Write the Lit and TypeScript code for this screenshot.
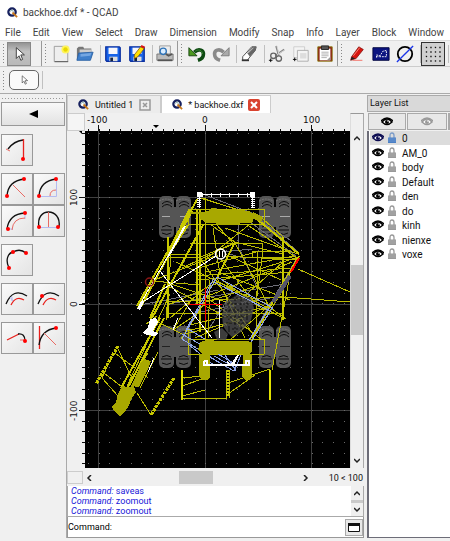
import { LitElement, html, svg, css } from "lit";
import { customElement, property, state } from "lit/decorators.js";
import { classMap } from "lit/directives/class-map.js";

type Seg = [number, number, number, number];

/* ---------- toolbar icons (20 x 20) ---------- */
const toolIcons: Record<string, unknown> = {
  select: svg`<path d="M7 3v12l3-3 2 5 2-1-2-5h4z" fill="#fff" stroke="#333"/>`,
  new: svg`<path d="M2.500 1.500h15v17h-15z" fill="#eee" stroke="#999"/><path d="M3 18.500h15" stroke="#555"/>
    <circle cx="15" cy="5" r="4.500" fill="#fff45a"/><circle cx="15" cy="5" r="2.500" fill="#e8d800"/>`,
  open: svg`<path d="M1 16V4l2-2h5l1 2h8v10z" fill="#777"/><path d="M4 5h13v8H4z" fill="#ccc"/>
    <path d="M3 9l16-1-3 9H1z" fill="#3f7fcb" stroke="#2b62a5"/><path d="M5 10l12-1-1 3-11 1z" fill="#75a7e2"/>`,
  save: svg`<path d="M2 2h15l1 1v15H3l-1-1z" fill="#1763e8" stroke="#0b2fa0" stroke-width="1.500"/>
    <path d="M5 3h10v7H5z" fill="#f6f6fb"/><path d="M6 13h9v5H6z" fill="#ddd"/><path d="M7 14h3v4H7z" fill="#124"/>`,
  saveas: svg`<path d="M2 2h15l1 1v15H3l-1-1z" fill="#1763e8" stroke="#0b2fa0" stroke-width="1.500"/>
    <path d="M5 3h10v7H5z" fill="#f6f6fb"/><path d="M6 13h9v5H6z" fill="#ddd"/><path d="M7 14h3v4H7z" fill="#124"/>
    <path d="M7 11L14 2l4 2-7 9-4 2z" fill="#ffe000" stroke="#7a4a00" stroke-width=".8"/><path d="M14 2l1-2 4 2-1 2z" fill="#e01010"/>`,
  print: svg`<path d="M4 1h12v10H4z" fill="#eee" stroke="#999"/><path d="M1 10h18v7H1z" fill="#bbb" stroke="#777"/>
    <path d="M2 17h16" stroke="#555" stroke-width="2"/><circle cx="8" cy="7" r="3.500" fill="#d9ecff" stroke="#2f73b7" stroke-width="1.500"/>
    <path d="M11 10l3 2 4-2" stroke="#555" stroke-width="2" fill="none"/>`,
  undo: svg`<path d="M7 8c5-5 11-2 10 3 0 3-3 5-6 6" fill="none" stroke="#0d4a12" stroke-width="4"/>
    <path d="M1 3v9h9z" fill="#4c9a1f" stroke="#123f0c"/><path d="M8 7c4-3 8-1 8 3" fill="none" stroke="#3d8b34"/>`,
  redo: svg`<path d="M13 8C8 3 2 6 3 11c0 3 3 5 6 6" fill="none" stroke="#8a8a8a" stroke-width="4"/>
    <path d="M19 3v9h-9z" fill="#aaa" stroke="#777"/>`,
  erase: svg`<path d="M3 13L13 2h5l-1 4L8 17H3z" fill="#fff" stroke="#444"/><path d="M8 9l6-7h4l-1 4-6 7z" fill="#666"/>
    <path d="M9 9l6-6" stroke="#ccc"/><path d="M2 17h8" stroke="#333" stroke-width="2"/>`,
  cut: svg`<path d="M9 1l3 11M18 5L8 12" stroke="#888" stroke-width="2"/><path d="M10 1l2 9M18 6l-8 5" stroke="#ddd"/>
    <circle cx="6" cy="12" r="3" fill="none" stroke="#666" stroke-width="1.500"/><circle cx="12" cy="15" r="3" fill="none" stroke="#666" stroke-width="1.500"/>
    <path d="M1 17h4M3 15v4" stroke="#000"/>`,
  copy: svg`<path d="M2 2h12v12H2z" fill="#f4f4f4" stroke="#ccc"/><path d="M6 6h12v12H6z" fill="#f4f4f4" stroke="#aaa"/>
    <path d="M9 9h7v6H9z" fill="#ddd"/><path d="M1 16h4M3 14v4" stroke="#000"/>`,
  paste: svg`<path d="M2 2h16v16H2z" fill="#8c1a12" stroke="#8a7a10"/><path d="M4 4h12v13H4z" fill="#fff"/>
    <path d="M6 1h8v4H6z" fill="#555" stroke="#222"/><path d="M6 8h8M6 10h8M6 12h8M6 14h6" stroke="#aaa"/><path d="M12 17l4-4v4z" fill="#999"/>`,
  pencil: svg`<path d="M4 13L12 2l5 3-8 10-6 2z" fill="#d8150f" stroke="#7b0d08" stroke-width=".8"/><path d="M6 12l7-9" stroke="#ff8a7a"/>
    <path d="M3 17l1-4 4 2z" fill="#222"/><path d="M5 17h11" stroke="#f36b60"/>`,
  block: svg`<path d="M1 3h18v14H1z" fill="#0b1480" stroke="#020640"/><path d="M5 14V11l4 1 3-5 4-1v7H6" fill="none" stroke="#fff" stroke-dasharray="2 1"/>`,
  circle: svg`<circle cx="10" cy="10" r="8" fill="none" stroke="#000" stroke-width="2"/><path d="M1 19L19 1" stroke="#1b35e8" stroke-width="1.500"/>`,
  grid: svg`${[2, 7, 12, 17].map((y) => [2, 7, 12, 17].map((x) => svg`<path d="M${x} ${y}h1.500v1.500h-1.500z" fill="#111"/>`))}`,
};

/* ---------- arc tool icons (32 x 32) ---------- */
const dot = (x: number, y: number) => svg`<circle cx=${x} cy=${y} r="2" fill="#f00"/>`;
const ink = (d: string) => svg`<path d=${d} fill="none" stroke="#111" stroke-width="1.300"/>`;
const red = (d: string) => svg`<path d=${d} fill="none" stroke="#e86a64" stroke-width="1"/>`;
const bold = (d: string) => svg`<path d=${d} fill="none" stroke="#e8201c" stroke-width="1.300"/>`;
const blue = (d: string) => svg`<path d=${d} fill="none" stroke="#b4bbf0" stroke-width="1"/>`;

const arcTools: { label: string; art: unknown }[][] = [
  [{ label: "Arc from 2 points", art: svg`${ink("M7 15Q13 7 22 6")}${bold("M22.5 5V25")}${red("M5 15l4 2")}${dot(22, 25)}` }],
  [
    { label: "Arc from center", art: svg`${ink("M6 23Q7 8 23 6")}${red("M12 12L24 24")}${dot(23, 6)}${dot(6, 23)}` },
    { label: "Arc with angle", art: svg`${ink("M6 23Q7 8 23 6")}${blue("M6 23.5H23.5V6")}${red("M17 23Q17 17 23 17")}${dot(23, 6)}${dot(6, 23)}` },
    { label: "Arc with length", art: svg`${ink("M6 24Q8 9 24 8")}${blue("M24 8v6M6 24h6")}${red("M11 25Q12 13 24 13")}${dot(24, 8)}${dot(7, 24)}` },
    { label: "Arc with height", art: svg`${ink("M6 22C2 2 29 2 26 22")}${blue("M6 22.5H26")}${red("M15.500 7V22")}${dot(6, 22)}${dot(25, 22)}` },
  ],
  [{ label: "Arc from 3 points", art: svg`${ink("M8 24C4 16 7 9 12 8Q19 4 25 9")}${dot(8, 24)}${dot(12, 8)}${dot(25, 9)}` }],
  [
    { label: "Concentric", art: svg`${ink("M5 21Q12 4 26 13")}${blue("M9 14l3 4m-1-4v4")}${bold("M10 22Q15 12 23 17")}` },
    { label: "Concentric through point", art: svg`${ink("M5 21Q12 4 26 13")}${bold("M10 22Q15 12 23 17")}${dot(9, 13)}` },
  ],
  [
    { label: "Tangential", art: svg`${bold("M6 18L18 12")}${ink("M17 12Q24 11 24 19")}${red("M19 18h6")}${dot(24, 19)}` },
    { label: "Arc tangential to line", art: svg`${bold("M6.500 4V27")}${ink("M6 23Q8 8 23 6")}${red("M11 11L23 23")}${dot(23, 6)}` },
  ],
];

const logo = html`<svg class="logo" viewBox="0 0 12 12"><circle cx="5.500" cy="5.500" r="4" fill="#fff" stroke="#16205e" stroke-width="2.500"/>
  <path d="M3 5l3-2 1 3" fill="none" stroke="#8aa" /><path d="M6 6l5 5" stroke="#c9791d" stroke-width="2"/></svg>`;

/* ---------- backhoe drawing, in sheet coordinates ---------- */
const frameSegs: Seg[] = [
  [198, 198, 137, 306], [192, 211, 141, 307], [168, 237, 168, 318], [197, 210, 197, 304], [200, 210, 200, 332],
  [203, 225, 152, 318], [188, 225, 168, 256], [252, 215, 299, 254], [283, 237, 283, 320], [299, 256, 252, 338],
  [165, 284, 150, 318], [160, 318, 121, 388], [164, 318, 125, 393], [235, 242, 217, 278], [189, 210, 168, 254],
];
const yellowSegs: Seg[] = [
  [190, 209, 137, 309], [171, 254, 166, 320], [200, 198, 256, 215], [202, 198, 247, 213], [188, 209, 264, 209],
  [188, 224, 264, 224], [264, 209, 264, 224], [188, 209, 188, 224], [205, 198, 205, 340], [168, 254, 200, 254],
  [168, 257, 200, 257], [190, 243, 262, 243], [262, 218, 283, 237], [225, 228, 298, 254], [246, 224, 297, 258],
  [210, 224, 235, 242], [216, 224, 235, 245], [213, 228, 220, 275], [250, 224, 205, 260], [252, 251, 292, 251],
  [252, 257, 292, 257], [252, 251, 252, 258], [262, 243, 262, 258], [235, 242, 283, 254], [263, 251, 256, 304],
  [235, 243, 198, 258], [235, 243, 182, 268], [258, 252, 256, 330], [225, 256, 296, 260], [295, 256, 205, 272],
  [290, 272, 198, 280], [292, 262, 198, 300], [299, 257, 223, 280], [168, 283, 235, 305], [152, 281, 215, 256],
  [152, 281, 200, 285], [158, 276, 168, 256], [168, 305, 220, 282], [168, 302, 283, 297], [170, 318, 215, 280],
  [168, 313, 283, 313], [170, 287, 250, 330], [200, 304, 256, 286], [218, 272, 290, 300], [225, 254, 281, 280],
  [220, 258, 256, 305], [235, 243, 270, 308], [176, 262, 236, 290], [200, 258, 250, 330], [210, 280, 208, 339],
  [217, 278, 245, 338], [216, 281, 268, 308], [217, 284, 270, 305], [222, 280, 264, 310], [190, 325, 260, 308],
  [195, 338, 273, 304], [230, 340, 270, 305], [256, 304, 285, 319], [268, 306, 286, 319], [249, 345, 289, 280],
  [290, 275, 272, 370], [284, 297, 350, 302], [298, 269, 350, 292], [188, 339, 264, 339], [188, 354, 264, 354],
  [264, 339, 264, 354], [188, 325, 188, 354], [170, 294, 127, 386], [150, 318, 182, 334], [157, 316, 146, 324],
  [173, 330, 200, 312], [173, 330, 190, 302], [181, 339, 205, 302], [185, 331, 205, 327], [185, 334, 240, 320],
  [182, 378, 202, 376], [182, 386, 205, 378], [182, 399, 228, 398], [182, 396, 205, 390], [228, 394, 255, 375],
  [228, 383, 270, 369], [226, 370, 226, 398], [229, 370, 229, 398], [117, 347, 131, 376], [115, 353, 148, 378],
  [113, 354, 102, 378], [102, 378, 118, 396], [104, 373, 126, 390], [137, 393, 151, 415], [148, 353, 120, 398],
  [158, 352, 140, 388], [240, 300, 283, 262], [198, 268, 256, 252], [198, 276, 290, 268], [205, 296, 262, 340],
];
const graySegs: Seg[] = [
  [246, 212, 290, 240], [254, 215, 296, 250], [238, 224, 238, 250], [240, 250, 258, 290], [230, 254, 246, 259],
  [168, 304, 285, 284], [205, 195, 262, 217], [222, 252, 252, 249], [140, 305, 218, 290], [297, 258, 255, 330],
  [250, 222, 296, 256], [260, 220, 298, 252], [205, 335, 240, 280], [200, 312, 280, 296], [216, 312, 250, 300],
];
const whiteSegs: Seg[] = [
  [199, 194, 252, 194], [252, 194, 252, 208], [199, 194, 199, 208], [185, 227, 139, 306], [216, 256, 141, 303],
  [160, 271, 212, 338], [156, 318, 150, 334], [219, 300, 219, 338], [178, 318, 173, 330],
  [154, 358, 148, 372],
];
const blueSegs: Seg[] = [
  [217, 277, 273, 308], [214, 282, 270, 311], [217, 277, 182, 339], [214, 278, 186, 330], [273, 307, 251, 342],
  [269, 308, 249, 340], [182, 339, 220, 363], [182, 334, 232, 362], [188, 329, 205, 339], [206, 355, 234, 371],
  [234, 371, 241, 355], [188, 344, 215, 366], [214, 356, 236, 368], [220, 355, 238, 366], [225, 355, 236, 371],
];
const tires: [number, number, boolean][] = [[159, 196, true], [259, 196, true], [159, 326, false], [259, 326, false]];

const lines = (segs: Seg[]) => segs.map(([a, b, c, d]) => `M${a} ${b}L${c} ${d}`).join("");

const tire = ([x, y, up]: [number, number, boolean]) => svg`<g transform="translate(${x} ${y})">
  <rect width="15" height="42" rx="5" fill="#555"/><rect x="17" width="15" height="42" rx="5" fill="#555"/>
  <rect x="12" y="11" width="8" height="20" fill="#555"/>
  ${[0, 17].map((o) => svg`<path d="M${o + 3} 8q5-5 10 0M${o + 3} 11q5-5 10 0M${o + 2} ${up ? 34 : 33}h11M${o + 3} 37q5 3 9 0M${o + 3} 31q5-3 9 0"
    fill="none" stroke="#0a0a0a"/>`)}
  <path d="M0 5q7-4 14 0M17 5q7-4 14 0" fill="none" stroke="#777" stroke-dasharray="2 1"/>
  <path d="M3 20.500h8M21 20.500h10" stroke=${up ? "#aaa" : "#222"}/></g>`;

@customElement("cad-canvas")
export class CadCanvas extends LitElement {
  static styles = css`
    :host { display: block; background: #000; min-width: 0; min-height: 0; overflow: hidden; contain: size; }
    svg { display: block; width: 100%; height: 100%; }
  `;
  render() {
    const xs = Array.from({ length: 25 }, (_, i) => 88 + Math.round(i * 10.65));
    const ys = Array.from({ length: 32 }, (_, i) => 133 + Math.round(i * 10.65));
    return html`<svg viewBox="85 131 265 337" preserveAspectRatio="xMidYMid slice" shape-rendering="crispEdges" role="img" aria-label="Drawing">
      <path d="M98.500 131V468M205.500 131V468M311.500 131V468M85 197.500H350M85 304.500H350M85 410.500H350" stroke="#404040"/>
      <path d=${ys.map((y) => xs.map((x) => `M${x} ${y}h1v1h-1z`).join("")).join("")} fill="#6a6a6a"/>
      <g shape-rendering="auto">${tires.map(tire)}</g>
      <path d=${lines(graySegs)} stroke="#6e6e78"/>
      <path d=${lines(yellowSegs)} stroke="#bcbc00"/>
      <path d=${lines(frameSegs)} stroke="#c8c800" stroke-width="2"/>
      <g shape-rendering="auto">
      <path d="M222 314l4-12 12-8 13 4 3 10-3 12-10 12-9 5-5-5-4-6zM214 332l8-4 6 6-2 6h-9z" fill="#4c4c4c" fill-opacity=".8"/>
      <path d="M223 304h26M221 310h30M222 317h28M226 323h22M228 298h22M228 329h14M229 298v34M235 295v40M241 295v36M247 298v24" stroke="#111" stroke-dasharray="2 2"/></g>
      <path d=${lines(blueSegs)} stroke="#8da3e6" stroke-width="1"/>
      <path d="M273 302L290 276" stroke="#55556a" stroke-width="4"/>
      <path d=${lines(whiteSegs)} stroke="#fff"/>
      <path d="M185 226L168 257" stroke="#fff" stroke-width="2"/>
      <path d="M199 206.500V194M252.500 208V194" stroke="#fff" stroke-width="4" stroke-dasharray="1 1"/>
      <path d="M202 194.500H252" stroke="#fff" stroke-width="4" stroke-dasharray="1 8"/>
      <path d="M197 192h5v5h-5zM250 192h5v5h-5z" fill="#fff"/>
      <path d="M200 213l8-2 3-3h4l2 2h8l8-1 16 2 4 3v7l-2 2h-10l-3 2h-20l-3-2h-8l-7-4z" fill="#a8a800"/>
      <path d="M190 212h12v2h-12zM253 212l10 5-2 5-10-4z" fill="#a8a800"/>
      <path d="M200 342l10-3h2l2 2h32l6 1v9l-2 3h-48l-4-4zM199 354h11v24l-3 2h-5l-3-3zM243 354h9v23l-3 3h-4l-3-3z" fill="#a8a800"/>
      <path d="M112 407l4-5 2-8 4-8 6 1 6-1 2 6-4 6-4 9-4 6-4 3-5-4z" fill="#a8a800"/>
      <path d="M131 386l8-17 1-6 4-4 7 2-3 8-9 18z" fill="#a8a800"/>
      <path d="M118 346L96 384M174 378L151 415" stroke="#c6c600" stroke-width="3" stroke-dasharray="3 1"/>
      <path d="M227.500 370V397" stroke="#c6c600" stroke-width="4" stroke-dasharray="2 1"/>
      <path d="M182 370V400M270 370V400" stroke="#e0e000" stroke-width="2"/>
      <path d="M143 333l5-6 2-8 6-1 2 4-5 9 5 2-3 3-8-1zM137 309l4-8 3 1-4 8z" fill="#fff"/>
      <path d="M204 361v4h45v-4h-3v3M234 364l4-9-7 10-4-3M204 361h3v4" fill="none" stroke="#fff" stroke-width="1.500"/>
      <circle cx="220.500" cy="254" r="5" fill="none" stroke="#fff" stroke-width="1.500" shape-rendering="auto"/>
      <path d="M219 251v6M222 251v6" stroke="#fff"/>
      <circle cx="149.500" cy="282" r="4" fill="none" stroke="#8a1616" stroke-width="1.500" shape-rendering="auto"/>
      <path d="M299 258L291 272" stroke="#f00" stroke-width="2"/>
      <path d="M189 304.500H222M205.500 288V321" stroke="#f00"/>
    </svg>`;
  }
}

@customElement("cad-ruler")
export class CadRuler extends LitElement {
  @property({ type: Boolean, reflect: true }) vertical = false;
  static styles = css`
    :host { display: block; background: #f0f0f0; contain: size; overflow: hidden; min-height: 0; min-width: 0; }
    svg { display: block; width: 100%; height: 100%; }
    text { font: 10px "DejaVu Sans", sans-serif; fill: #111; }
    .level { font-size: 9px; }
  `;
  render() {
    if (this.vertical) {
      const ticks = Array.from({ length: 32 }, (_, i) => `M82 ${133 + Math.round(i * 10.65)}.5h3`).join("");
      return html`<svg viewBox="67 131 18 337" preserveAspectRatio="xMaxYMid slice">
        <path d="${ticks}M79 197.500h6M79 304.500h6M79 410.500h6" stroke="#111"/><path d="M79 131l3 3v-3z" fill="#000"/>
        <text class="level" transform="translate(77 206) rotate(-90)">100</text><text class="level" transform="translate(77 307) rotate(-90)">0</text>
        <text class="level" transform="translate(77 421) rotate(-90)">-100</text></svg>`;
    }
    const ticks = Array.from({ length: 25 }, (_, i) => `M${88 + Math.round(i * 10.65)}.5 129v2`).join("");
    return html`<svg viewBox="85 113 265 18" preserveAspectRatio="xMidYMax meet">
      <path d="${ticks}M98.500 125v6M205.500 125v6M311.500 125v6" stroke="#111"/><path d="M153 125h6l-3 3z" fill="#000"/>
      <text class="level" x="87" y="123">-100</text><text class="level" x="202" y="123">0</text><text class="level" x="303" y="123">100</text></svg>`;
  }
}

@customElement("layer-list")
export class LayerList extends LitElement {
  @state() private current = "0";
  private layers = ["0", "AM_0", "body", "Default", "den", "do", "kinh", "nienxe", "voxe"];
  static styles = css`
    :host { display: flex; flex-direction: column; min-width: 0; font: 10px Roboto, sans-serif; color: #111; }
    .head { height: 15px; line-height: 15px; padding-left: 2px; background: #d9d9d9; border: 1px solid #aaa; border-right: 0; margin: 0; font-size: 9px; font-weight: 400; }
    .modes { display: grid; grid-template-columns: 38px 40px 1fr; gap: 1px; height: 17px; padding: 1px 0 1px 1px; overflow: hidden; }
    .modes button { padding: 0; min-width: 0; border: 1px solid #aaa; background: #e8e8e8; display: grid; place-items: center; }
    .rows { flex: 1; margin: 0; padding: 0 0 0 1px; list-style: none; background: #fff; border-left: 2px solid #6d6d78; border-bottom: 1px solid #6d6d78; }
    .row { display: flex; align-items: center; width: 100%; height: 14px; border: 0; padding: 0 0 0 2px; background: none; font: inherit; color: inherit; text-align: left; }
    .rows li { height: 14px; margin-bottom: 1px; }
    .rows li:nth-child(even) { margin-bottom: 0; }
    .on { background: #dcdcdc; }
    .eye { width: 12px; height: 10px; flex: none; }
    .lock { width: 8px; height: 12px; margin: 0 6px 0 4px; flex: none; }
  `;
  private eye(color: string) {
    return html`<svg class="eye" viewBox="0 0 12 10"><path d="M1 5Q6-1 11 5Q6 10 1 5z" fill="#fff" stroke=${color} stroke-width="1.500"/>
      <path d="M0 4Q6-2 12 4" fill="none" stroke=${color} stroke-width="1.300"/><circle cx="6" cy="5" r="2" fill=${color}/><circle cx="7" cy="4" r=".8" fill="#fff"/></svg>`;
  }
  render() {
    return html`<h2 class="head">Layer List</h2>
      <div class="modes">
        <button aria-label="Show all">${this.eye("#000")}</button><button aria-label="Hide all">${this.eye("#999")}</button><button aria-label="Add layer"></button>
      </div>
      <ul class="rows">${this.layers.map((name) => {
        const on = name === this.current;
        return html`<li><button class=${classMap({ row: true, on })} @click=${() => (this.current = name)}>
          ${this.eye(on ? "#0a0a50" : "#000")}
          <svg class="lock" viewBox="0 0 8 12"><path d="M2 6V3.500Q2 1 4 1Q6 1 6 3.500V6" fill="none" stroke=${on ? "#7c9cc8" : "#999"} stroke-width="1.300"/>
            <path d="M0 5.500h8V11H0z" fill=${on ? "#4a7fc4" : "#999"}/><path d="M0 7h8M0 9h8" stroke=${on ? "#78a3da" : "#b5b5b5"} stroke-width=".6"/></svg>${name}</button></li>`;
      })}</ul>`;
  }
}

@customElement("app-root")
export class AppRoot extends LitElement {
  @state() private tool = "select";
  private menus = ["File", "Edit", "View", "Select", "Draw", "Dimension", "Modify", "Snap", "Info", "Layer", "Block", "Window"];
  private log = ["saveas", "zoomout", "zoomout"];

  static styles = css`
    :host { display: flex; flex-direction: column; min-height: 100vh; box-sizing: border-box; overflow: hidden; background: #f0f0f0; color: #222; font: 10px Roboto, sans-serif; }
    button { font: inherit; color: inherit; padding: 0; margin: 0; }
    .title { display: flex; align-items: center; height: 24px; padding-left: 7px; background: #fff; color: #444; gap: 5px; margin: 0; font-weight: 400; font-size: 10px; }
    .logo { width: 11px; height: 11px; flex: none; }
    .menu { display: flex; gap: 12px; height: 17px; padding-left: 5px; background: #fff; overflow: hidden; border-bottom: 1px solid #ddd; box-sizing: border-box; }
    .menu button { border: 0; background: none; color: #444; flex: none; }
    .bar { display: flex; align-items: center; height: 26px; overflow: hidden; border-bottom: 1px solid #ccc; box-sizing: border-box; background: #f0f0f0; }
    .bar > * { flex: none; }
    .grip { width: 3px; height: 21px; margin: 0 2px; background: radial-gradient(circle, #888 1px, transparent 1px) 0 0 / 3px 3px; }
    .tool { width: 24px; height: 24px; border: 0; background: none; display: grid; place-items: center; }
    .tool svg { width: 18px; height: 18px; }
    .pressed { background: linear-gradient(#8f8f8f, #c2c2c2 40%, #b8b8b8); outline: 1px solid #888; outline-offset: -1px; }
    .pale { background: #d0d0d0; outline: 1px solid #333; outline-offset: -1px; }
    .sep { width: 4px; height: 18px; box-sizing: border-box; border-right: 1px solid #c0c0c0; }
    .edge { width: 1px; height: 26px; background: #999; }
    .room { width: 10px; }
    .pick { width: 30px; height: 20px; margin-left: 2px; border: 1px solid #666; border-radius: 5px; background: #fafafa; display: grid; place-items: center; }
    .pick svg { width: 12px; height: 12px; }
    .second { height: 27px; border-bottom: 1px solid #aaa; }
    .body { flex: 1; display: grid; grid-template-columns: 67px minmax(0, 1fr) 83px; min-height: 0; }
    .side { padding: 3px 1px 0; display: flex; flex-direction: column; gap: 7px; border-right: 1px solid #aaa; }
    .dots { height: 3px; margin-right: 1px; background: radial-gradient(circle, #999 1px, transparent 1px) 0 0 / 3px 3px; margin-bottom: -5px; }
    .back { height: 24px; width: 64px; border: 1px solid #999; background: linear-gradient(#f8f8f8, #e2e2e2); margin-bottom: 1px; }
    .back svg { display: block; width: 9px; height: 8px; margin: auto; }
    .group { display: grid; grid-template-columns: 32px 32px; grid-auto-rows: 32px; }
    .arc { border: 1px solid #999; background: linear-gradient(135deg, #fafafa, #e4e4e4); }
    .arc svg { display: block; width: 32px; height: 32px; margin: -1px; }
    .center { display: flex; flex-direction: column; padding-top: 1px; min-width: 0; margin-right: 3px; }
    .tabs { display: flex; height: 18px; }
    .tab { display: flex; align-items: center; border: 1px solid #ccc; border-bottom: 0; box-sizing: border-box; background: #ececec; padding: 0 9px 0 10px; gap: 6px; color: #111; font-size: 9px; }
    .tab.active { background: #fff; padding: 0 10px; gap: 5px; }
    .name { border: 0; background: none; white-space: nowrap; }
    .x { width: 12px; height: 12px; border: 0; background: none; }
    .x svg { display: block; width: 12px; height: 12px; }
    .view { flex: 1; display: grid; grid-template: 18px minmax(0, 1fr) 18px / 18px minmax(0, 1fr) 14px; min-height: 336px; background: #f0f0f0; }
    .corner { background: #f5f5f5; border: 1px solid #ccc; }
    .vbar { grid-column: 3; grid-row: 1 / 3; display: flex; flex-direction: column; align-items: center; padding-top: 17px; border-left: 1px solid #ddd; border-right: 1px solid #aaa; border-top: 1px solid #999; box-sizing: border-box; }
    .arrow { width: 12px; height: 14px; flex: none; display: grid; place-items: center; border: 0; background: none; }
    .arrow svg { width: 6px; height: 6px; }
    .track { flex: 1; align-self: stretch; display: grid; grid-template-rows: 119fr 70fr 118fr; }
    .thumb { grid-row: 2; background: #c9c9c9; }
    .hbar { grid-column: 1 / 4; display: flex; align-items: center; padding-top: 1px; }
    .hbar .box { width: 16px; height: 13px; border: 1px solid #ccc; box-sizing: border-box; }
    .htrack { flex: 1; display: grid; grid-template-columns: 84fr 34fr 86fr; height: 13px; }
    .hthumb { grid-column: 2; background: #c9c9c9; }
    .scale { padding: 0 1px 0 17px; color: #111; font-size: 9px; }
    .console { display: grid; grid-template-columns: minmax(0, 1fr) 12px; height: 30px; border: 1px solid #aaa; border-top: 0; background: #fff; }
    .log { padding-left: 3px; color: #1717d8; font-size: 9px; line-height: 10px; }
    .log p { margin: 0; }
    .cbar { background: #f0f0f0; display: flex; flex-direction: column; align-items: center; justify-content: space-between; }
    .cbar .arrow { height: 13px; }
    .cthumb { align-self: stretch; height: 3px; background: #c9c9c9; }
    .prompt { display: flex; align-items: center; gap: 4px; height: 20px; border: 1px solid #999; border-top: 0; background: #fff; color: #000; font-size: 9px; }
    .prompt input { flex: 1; min-width: 0; border: 0; outline: 0; padding: 0; font: inherit; }
    .prompt button { width: 18px; height: 17px; border: 1px solid #aaa; background: #e8e8e8; display: grid; place-items: center; }
    .prompt svg { width: 12px; height: 9px; display: block; }
    layer-list { padding-top: 1px; }
    .status { height: 3px; background: #f0f0f0; }
  `;

  private btn(name: string) {
    return html`<button class=${classMap({ tool: true, pressed: name === this.tool, pale: name === "grid" })} aria-label=${name}
      @click=${() => (this.tool = name)}><svg viewBox="0 0 20 20">${toolIcons[name]}</svg></button>`;
  }
  private arrow(dir: string, label: string) {
    const d: Record<string, string> = { up: "M0 5l3-3 3 3", down: "M0 1l3 3 3-3", left: "M5 0L2 3l3 3", right: "M1 0l3 3-3 3" };
    return html`<button class="arrow" aria-label=${label}><svg viewBox="0 0 6 6"><path d=${d[dir]} fill="none" stroke="#222" stroke-width="1.500"/></svg></button>`;
  }

  render() {
    const sep = html`<span class="sep"></span>`;
    const edge = html`<span class="edge"></span><span class="grip"></span>`;
    return html`
      <h1 class="title">${logo}<span>backhoe.dxf * - QCAD</span></h1>
      <nav class="menu">${this.menus.map((m) => html`<button>${m}</button>`)}</nav>
      <div class="bar">
        <span class="grip"></span>${this.btn("select")}<span class="room"></span>${edge}
        ${this.btn("new")}${this.btn("open")}${sep}${this.btn("save")}${this.btn("saveas")}${sep}${this.btn("print")}${edge}
        ${this.btn("undo")}${this.btn("redo")}${sep}${this.btn("erase")}${sep}${this.btn("cut")}${this.btn("copy")}${this.btn("paste")}${edge}
        ${this.btn("pencil")}${this.btn("block")}${this.btn("circle")}${sep}${this.btn("grid")}${sep}
      </div>
      <div class="bar second"><span class="grip"></span>
        <button class="pick" aria-label="Selection mode"><svg viewBox="0 0 20 20">${toolIcons.select}</svg></button>${sep}</div>
      <main class="body">
        <aside class="side">
          <div class="dots"></div>
          <button class="back" aria-label="Back"><svg viewBox="0 0 9 8"><path d="M9 0v8L0 4z" fill="#000"/></svg></button>
          ${arcTools.map((g) => html`<div class="group">${g.map((t) => html`<button class="arc" aria-label=${t.label}><svg viewBox="0 0 32 32">${t.art}</svg></button>`)}</div>`)}
        </aside>
        <section class="center">
          <div class="tabs">
            <div class="tab">${logo}<button class="name">Untitled 1</button><button class="x" aria-label="Close Untitled 1"><svg viewBox="0 0 12 12"><path d="M1 1h10v10H1z" fill="#eee" stroke="#999" stroke-width="1.500"/><path d="M4 4l4 4M8 4l-4 4" stroke="#999" stroke-width="1.500"/></svg></button></div>
            <div class="tab active">${logo}<button class="name">* backhoe.dxf</button><button class="x" aria-label="Close backhoe.dxf"><svg viewBox="0 0 12 12"><rect width="12" height="12" rx="2" fill="#d9432f"/><path d="M3 3l6 6M9 3L3 9" stroke="#fff" stroke-width="2"/></svg></button></div>
          </div>
          <div class="view">
            <div class="corner"></div><cad-ruler></cad-ruler>
            <div class="vbar">${this.arrow("up", "Scroll up")}<div class="track"><div class="thumb"></div></div>${this.arrow("down", "Scroll down")}</div>
            <cad-ruler vertical></cad-ruler><cad-canvas></cad-canvas>
            <div class="hbar"><span class="box"></span>${this.arrow("left", "Scroll left")}<div class="htrack"><div class="hthumb"></div></div>${this.arrow("right", "Scroll right")}<span class="scale">10 &lt; 100</span></div>
          </div>
          <div class="console">
            <div class="log">${this.log.map((l) => html`<p><i>Command:</i> ${l}</p>`)}</div>
            <div class="cbar">${this.arrow("up", "Log up")}<div class="cthumb"></div>${this.arrow("down", "Log down")}</div>
          </div>
          <div class="prompt"><label for="cmd">Command:</label><input id="cmd" /><button aria-label="Toggle log"><svg viewBox="0 0 12 9"><path d="M.5 1v7.500h11V1z" fill="#fff" stroke="#111"/><path d="M0 0h12v3H0z" fill="#111"/></svg></button></div>
        </section>
        <layer-list></layer-list>
      </main>
      <footer class="status"></footer>`;
  }
}
